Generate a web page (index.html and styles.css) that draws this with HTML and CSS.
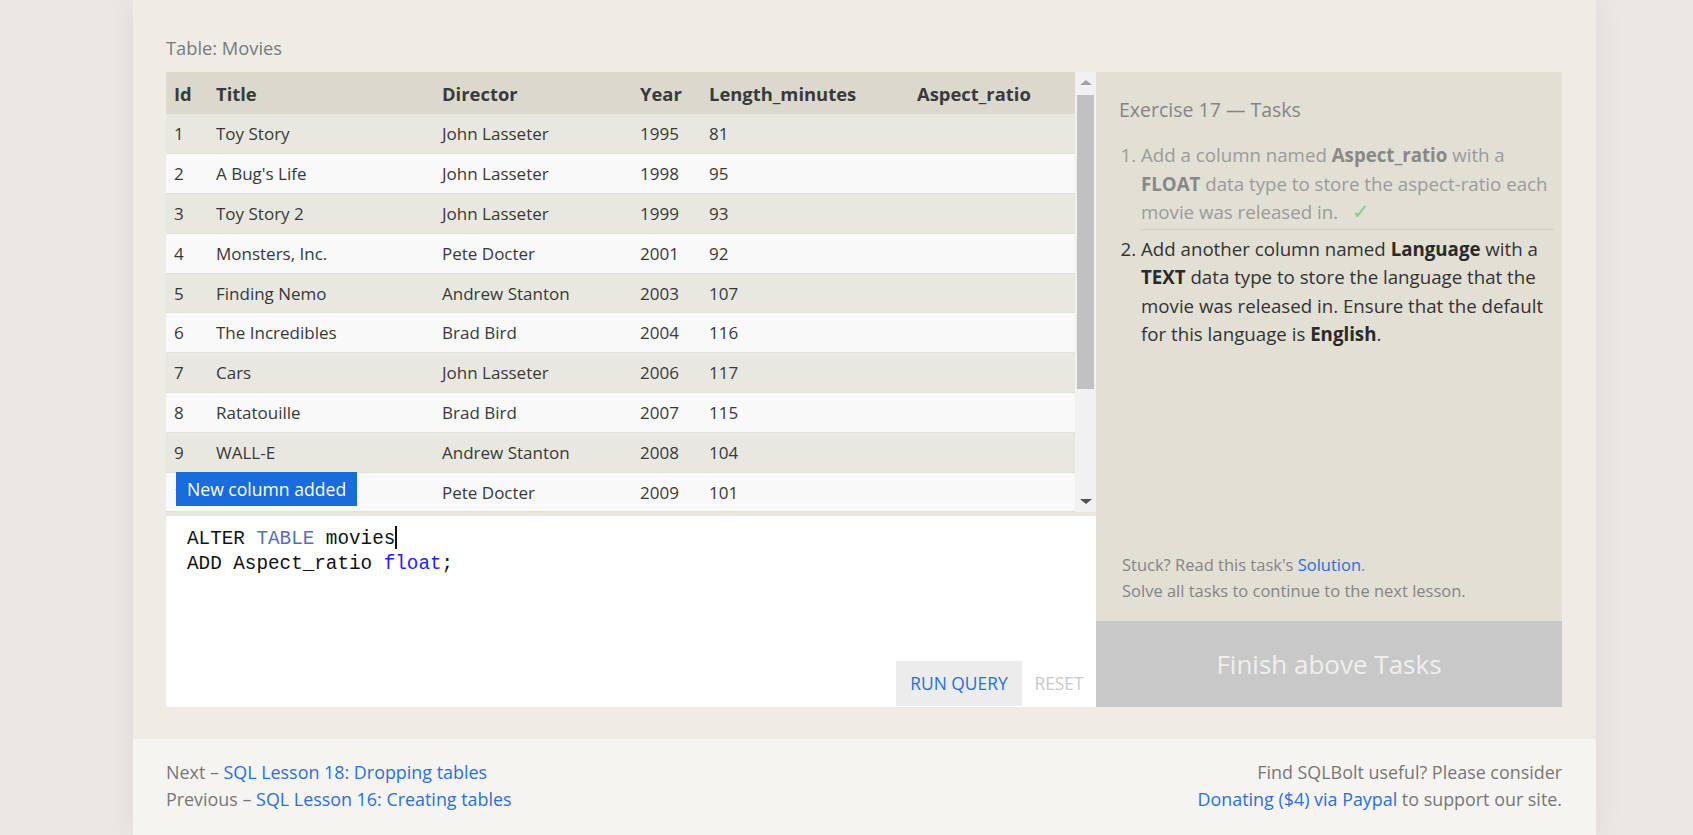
FILE: index.html
```html
<!DOCTYPE html>
<html lang="en">
<head>
<meta charset="utf-8">
<title>SQLBolt - Lesson 17</title>
<link rel="stylesheet" href="styles.css">
</head>
<body>
<div class="page">
  <div class="main">
    <div class="caption">Table: Movies</div>
    <div class="exercise">
      <div class="left">
        <div class="results">
          <div class="viewport">
            <table class="movies">
              <thead>
                <tr><th class="c-id">Id</th><th class="c-title">Title</th><th class="c-dir">Director</th><th class="c-year">Year</th><th class="c-len">Length_minutes</th><th class="c-asp">Aspect_ratio</th></tr>
              </thead>
              <tbody>
                <tr><td>1</td><td>Toy Story</td><td>John Lasseter</td><td>1995</td><td>81</td><td></td></tr>
                <tr><td>2</td><td>A Bug's Life</td><td>John Lasseter</td><td>1998</td><td>95</td><td></td></tr>
                <tr><td>3</td><td>Toy Story 2</td><td>John Lasseter</td><td>1999</td><td>93</td><td></td></tr>
                <tr><td>4</td><td>Monsters, Inc.</td><td>Pete Docter</td><td>2001</td><td>92</td><td></td></tr>
                <tr><td>5</td><td>Finding Nemo</td><td>Andrew Stanton</td><td>2003</td><td>107</td><td></td></tr>
                <tr><td>6</td><td>The Incredibles</td><td>Brad Bird</td><td>2004</td><td>116</td><td></td></tr>
                <tr><td>7</td><td>Cars</td><td>John Lasseter</td><td>2006</td><td>117</td><td></td></tr>
                <tr><td>8</td><td>Ratatouille</td><td>Brad Bird</td><td>2007</td><td>115</td><td></td></tr>
                <tr><td>9</td><td>WALL-E</td><td>Andrew Stanton</td><td>2008</td><td>104</td><td></td></tr>
                <tr><td>10</td><td>Up</td><td>Pete Docter</td><td>2009</td><td>101</td><td></td></tr>
              </tbody>
            </table>
          </div>
          <div class="scrollbar">
            <div class="sb-btn"><span class="arrow-up"></span></div>
            <div class="sb-track"><div class="sb-thumb"></div></div>
            <div class="sb-btn"><span class="arrow-down"></span></div>
          </div>
          <div class="toast">New column added</div>
        </div>
        <div class="editor">
          <div class="code">
            <div class="line">ALTER <span class="kw">TABLE</span> movies<span class="cursor"></span></div>
            <div class="line">ADD Aspect_ratio <span class="type">float</span>;</div>
          </div>
          <div class="actions">
            <span class="btn run">RUN QUERY</span>
            <span class="btn reset">RESET</span>
          </div>
        </div>
      </div>
      <div class="tasks">
        <div class="tasks-body">
          <div class="tasks-title">Exercise 17 — Tasks</div>
          <ol class="task-list">
            <li class="done">Add a column named <b>Aspect_ratio</b> with a <b>FLOAT</b> data type to store the aspect-ratio each movie was released in. <span class="check">✓</span></li>
            <li class="active">Add another column named <b>Language</b> with a <b>TEXT</b> data type to store the language that the movie was released in. Ensure that the default for this language is <b>English</b>.</li>
          </ol>
        </div>
        <div class="stuck">
          <div>Stuck? Read this task's <a href="#">Solution</a>.</div>
          <div>Solve all tasks to continue to the next lesson.</div>
        </div>
        <div class="finish">Finish above Tasks</div>
      </div>
    </div>
  </div>
  <div class="footer">
    <div class="nav">
      <div>Next – <a href="#">SQL Lesson 18: Dropping tables</a></div>
      <div>Previous – <a href="#">SQL Lesson 16: Creating tables</a></div>
    </div>
    <div class="donate">
      <div>Find SQLBolt useful? Please consider</div>
      <div><a href="#">Donating ($4) via Paypal</a> to support our site.</div>
    </div>
  </div>
</div>
</body>
</html>
```

FILE: styles.css
```css
html, body {
  margin: 0;
  padding: 0;
}
body {
  background: #ebe7e4;
  font-family: "Open Sans", "Noto Sans", sans-serif;
  color: #333;
  overflow: hidden;
}
a {
  color: #2a6fdb;
  text-decoration: none;
}
.page {
  margin-left: 133px;
  width: 1463px;
  box-shadow: 0 0 28px rgba(90, 70, 60, 0.08);
}
.main {
  background: #efece5;
  padding: 36px 34px 32px 33px;
  border-radius: 0 0 4px 4px;
}
.caption {
  font-size: 18.3px;
  line-height: 24px;
  color: #7a7a7a;
  margin-bottom: 12px;
}
.exercise {
  display: flex;
  height: 635px;
}
.left {
  width: 930px;
  display: flex;
  flex-direction: column;
}
.results {
  position: relative;
  display: flex;
  height: 440px;
  flex: none;
}
.viewport {
  width: 909px;
  overflow: hidden;
}
.movies {
  width: 909px;
  table-layout: fixed;
  border-collapse: collapse;
  font-size: 17px;
}
.movies th {
  background: #dbd9ce;
  text-align: left;
  font-weight: 700;
  font-size: 18.4px;
  color: #3a3a3a;
  padding: 1px 8px 0;
  height: 42px;
  line-height: 41px;
  white-space: nowrap;
  box-sizing: border-box;
}
.movies td {
  padding: 2px 8px 0;
  height: 39.8px;
  line-height: 36.8px;
  border-bottom: 1px solid #e2e0d9;
  white-space: nowrap;
  color: #383838;
  box-sizing: border-box;
}
.movies tbody tr:nth-child(odd) td {
  background: #e9e8e0;
}
.movies tbody tr:nth-child(even) td {
  background: #f9f9f9;
}
.c-id { width: 42px; }
.c-title { width: 226px; }
.c-dir { width: 198px; }
.c-year { width: 69px; }
.c-len { width: 208px; }
.c-asp { width: 166px; }
.scrollbar {
  width: 21px;
  background: #f1f1f1;
  display: flex;
  flex-direction: column;
}
.sb-btn {
  height: 21px;
  display: flex;
  align-items: center;
  justify-content: center;
  flex: none;
}
.arrow-up {
  width: 0;
  height: 0;
  border-left: 6px solid transparent;
  border-right: 6px solid transparent;
  border-bottom: 5px solid #a3a3a3;
}
.arrow-down {
  width: 0;
  height: 0;
  border-left: 6px solid transparent;
  border-right: 6px solid transparent;
  border-top: 5px solid #505050;
}
.sb-track {
  flex: 1;
  padding: 2px 2px 0 2px;
}
.sb-thumb {
  height: 294px;
  background: #c1c1c1;
}
.toast {
  position: absolute;
  left: 10px;
  top: 400px;
  height: 34px;
  line-height: 34px;
  padding: 0 11px;
  background: #1a6bdb;
  color: #fff;
  font-size: 17.6px;
}
.editor {
  flex: 1;
  background: #fff;
  border-top: 4px solid #e9e6df;
  display: flex;
  flex-direction: column;
}
.code {
  flex: 1;
  padding: 10px 21px 0;
  font-family: "Liberation Mono", "DejaVu Sans Mono", monospace;
  font-size: 19.3px;
  line-height: 24.5px;
  color: #111;
}
.kw { color: #5870ac; }
.type { color: #2222ff; }
.cursor {
  display: inline-block;
  width: 2px;
  height: 23px;
  background: #111;
  vertical-align: -5px;
}
.actions {
  display: flex;
  justify-content: flex-end;
  height: 45px;
  margin-bottom: 1px;
}
.btn {
  font-size: 17.4px;
  line-height: 45px;
  text-align: center;
}
.run {
  width: 126px;
  background: #ececec;
  color: #2a6fd8;
}
.reset {
  width: 74px;
  color: #c9c9c9;
}
.tasks {
  flex: 1;
  background: #e2dfd4;
  display: flex;
  flex-direction: column;
}
.tasks-body {
  flex: 1;
  padding: 23px 8px 0 23px;
}
.tasks-title {
  font-size: 19.5px;
  line-height: 29px;
  color: #858585;
}
.task-list {
  margin: 17px 0 0;
  padding: 0 0 0 22px;
  font-size: 18.7px;
  line-height: 28.5px;
}
.task-list li.done {
  color: #9b9b9b;
  padding-bottom: 2px;
  border-bottom: 1px solid #d2cfc5;
}
.task-list li.done b {
  color: #888;
}
.check {
  color: #7fcf8b;
  margin-left: 9px;
  font-size: 21px;
  line-height: 20px;
}
.task-list li.active {
  color: #333;
  padding-top: 5px;
}
.task-list li.active b {
  color: #2a2a2a;
}
.stuck {
  padding: 0 20px 17px 26px;
  font-size: 16.5px;
  line-height: 26px;
  color: #858585;
}
.finish {
  height: 86px;
  line-height: 86px;
  background: #c8c8c8;
  color: #efefef;
  text-align: center;
  font-size: 26px;
}
.footer {
  background: #f6f4f1;
  height: 96px;
  box-sizing: border-box;
  padding: 20px 34px 0 33px;
  display: flex;
  justify-content: space-between;
  font-size: 17.9px;
  line-height: 27px;
  color: #777;
}
.donate {
  text-align: right;
}
```
